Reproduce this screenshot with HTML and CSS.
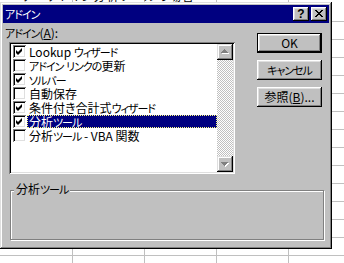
FILE: index.html
```html
<!DOCTYPE html>
<html lang="ja">
<head>
<meta charset="utf-8">
<link rel="stylesheet" href="styles.css">
</head>
<body>
<div class="sheet"><div class="sheet-text">ーア　アドイン分析ツールの場合</div></div>
<div class="dialog">
  <div class="titlebar">
    <span class="title"><span class="k">アドイン</span></span>
    <span class="tbtns">
      <span class="tbtn help">?</span>
      <span class="tbtn close"><svg width="16" height="14" viewBox="0 0 16 14" shape-rendering="crispEdges"><g fill="#000"><rect x="4" y="3" width="2" height="1"/><rect x="10" y="3" width="2" height="1"/><rect x="5" y="4" width="2" height="1"/><rect x="9" y="4" width="2" height="1"/><rect x="6" y="5" width="4" height="1"/><rect x="7" y="6" width="2" height="1"/><rect x="6" y="7" width="4" height="1"/><rect x="5" y="8" width="2" height="1"/><rect x="9" y="8" width="2" height="1"/><rect x="4" y="9" width="2" height="1"/><rect x="10" y="9" width="2" height="1"/></g></svg></span>
    </span>
  </div>
  <div class="main">
    <div class="left">
      <div class="label"><span class="k">アドイン</span>(<u>A</u>):</div>
      <div class="list">
        <div class="items">
          <div class="row"><span class="cb"><svg width="13" height="13" viewBox="0 0 13 13"><polygon points="3,5 5,7 9,3 9,6 5,10 3,8" fill="#000"/></svg></span><span class="txt">Lookup <span class="k">ウィザード</span></span></div>
          <div class="row"><span class="cb"></span><span class="txt"><span class="k">アドイン</span> <span class="k">リンクの</span>更新</span></div>
          <div class="row"><span class="cb"><svg width="13" height="13" viewBox="0 0 13 13"><polygon points="3,5 5,7 9,3 9,6 5,10 3,8" fill="#000"/></svg></span><span class="txt"><span class="k">ソルバー</span></span></div>
          <div class="row"><span class="cb"></span><span class="txt">自動保存</span></div>
          <div class="row"><span class="cb"><svg width="13" height="13" viewBox="0 0 13 13"><polygon points="3,5 5,7 9,3 9,6 5,10 3,8" fill="#000"/></svg></span><span class="txt">条件付き合計式<span class="k">ウィザード</span></span></div>
          <div class="row sel"><span class="cb"><svg width="13" height="13" viewBox="0 0 13 13"><polygon points="3,5 5,7 9,3 9,6 5,10 3,8" fill="#000"/></svg></span><span class="txt">分析<span class="k">ツール</span></span></div>
          <div class="row"><span class="cb"></span><span class="txt">分析<span class="k">ツール</span> - VBA 関数</span></div>
        </div>
        <div class="scroll">
          <div class="sbtn"><svg width="16" height="16" viewBox="0 0 16 16" shape-rendering="crispEdges"><g fill="#fff"><rect x="8" y="6" width="1" height="1"/><rect x="7" y="7" width="3" height="1"/><rect x="6" y="8" width="5" height="1"/><rect x="5" y="9" width="7" height="1"/></g><g fill="#808080"><rect x="7" y="5" width="1" height="1"/><rect x="6" y="6" width="3" height="1"/><rect x="5" y="7" width="5" height="1"/><rect x="4" y="8" width="7" height="1"/></g></svg></div>
          <div class="track"></div>
          <div class="sbtn"><svg width="16" height="16" viewBox="0 0 16 16" shape-rendering="crispEdges"><g fill="#fff"><rect x="5" y="7" width="7" height="1"/><rect x="6" y="8" width="5" height="1"/><rect x="7" y="9" width="3" height="1"/><rect x="8" y="10" width="1" height="1"/></g><g fill="#808080"><rect x="4" y="6" width="7" height="1"/><rect x="5" y="7" width="5" height="1"/><rect x="6" y="8" width="3" height="1"/><rect x="7" y="9" width="1" height="1"/></g></svg></div>
        </div>
      </div>
    </div>
    <div class="buttons">
      <div class="btn default"><span class="btn-in">OK</span></div>
      <div class="btn"><span class="btn-in"><span class="k">キャンセル</span></span></div>
      <div class="btn"><span class="btn-in">参照(<u>B</u>)...</span></div>
    </div>
  </div>
  <div class="group"><span class="legend">分析<span class="k">ツール</span></span></div>
</div>
</body>
</html>
```

FILE: styles.css
```css
* { box-sizing: border-box; }
html, body { margin: 0; padding: 0; }
body {
  width: 344px;
  height: 263px;
  overflow: hidden;
  position: relative;
  font-family: "Noto Sans CJK JP", "Noto Sans", sans-serif;
  font-feature-settings: "palt";
  font-size: 12px;
  color: #000;
  background-color: #fff;
  background-image:
    repeating-linear-gradient(to right, transparent 0 71px, #c0c0c0 71px 72px),
    repeating-linear-gradient(to bottom, transparent 0 17px, #c0c0c0 17px 18px);
  background-position: 1px 0, 0 4px;
}
.k { font-size: 11px; letter-spacing: -1px; }
.sheet { height: 3px; overflow: hidden; padding-left: 10px; }
.sheet-text { margin-top: -11px; line-height: 14px; font-size: 12px; letter-spacing: 1px; }

.dialog {
  position: absolute;
  left: 0;
  top: 2px;
  width: 332px;
  height: 247px;
  padding: 3px;
  background: #c0c0c0;
  box-shadow: inset -1px -1px #000, inset 1px 1px #dfdfdf, inset -2px -2px #808080, inset 2px 2px #fff;
}
.titlebar {
  height: 18px;
  background: #000080;
  display: flex;
  align-items: center;
  justify-content: space-between;
  padding: 0 2px;
}
.title { color: #fff; line-height: 18px; }
.tbtns { display: flex; gap: 2px; }
.tbtn {
  width: 16px;
  height: 14px;
  background: #c0c0c0;
  box-shadow: inset -1px -1px #000, inset 1px 1px #fff, inset -2px -2px #808080, inset 2px 2px #dfdfdf;
  display: flex;
  align-items: center;
  justify-content: center;
}
.help {
  font-family: "Liberation Sans", sans-serif;
  font-weight: bold;
  font-size: 12px;
  line-height: 14px;
  padding-bottom: 1px;
}
.close svg { display: block; }

.main { display: flex; height: 151px; }
.left { width: 232px; padding-left: 2px; }
.label { margin-top: 3px; height: 14px; line-height: 14px; }
.list {
  margin-top: 2px;
  margin-left: 4px;
  width: 226px;
  height: 132px;
  padding: 2px;
  background: #fff;
  display: flex;
  box-shadow: inset 1px 1px #808080, inset -1px -1px #fff, inset 2px 2px #000, inset -2px -2px #dfdfdf;
}
.items { flex: 1; min-width: 0; }
.row { display: flex; align-items: center; height: 14px; }
.cb {
  width: 13px;
  height: 13px;
  margin-left: 2px;
  margin-right: 1px;
  flex: none;
  background: #fff;
  box-shadow: inset 1px 1px #808080, inset -1px -1px #fff, inset 2px 2px #000, inset -2px -2px #dfdfdf;
}
.cb svg { display: block; }
.txt {
  flex: 1;
  height: 13px;
  line-height: 13px;
  padding-left: 2px;
  white-space: nowrap;
}
.sel .txt {
  background: #000080;
  color: #fff;
  outline: 1px dotted #ffff80;
  outline-offset: -1px;
}
.scroll { width: 16px; display: flex; flex-direction: column; }
.sbtn {
  width: 16px;
  height: 16px;
  flex: none;
  background: #c0c0c0;
  box-shadow: inset -1px -1px #000, inset 1px 1px #dfdfdf, inset -2px -2px #808080, inset 2px 2px #fff;
}
.sbtn svg { display: block; }
.track {
  flex: 1;
  background: repeating-conic-gradient(#c0c0c0 0 25%, #fff 0 50%) 0 0 / 2px 2px;
}

.buttons {
  margin-top: 10px;
  margin-left: 22px;
  display: flex;
  flex-direction: column;
  gap: 7px;
}
.btn {
  width: 65px;
  height: 20px;
  background: #c0c0c0;
  box-shadow: inset -1px -1px #000, inset 1px 1px #fff, inset -2px -2px #808080, inset 2px 2px #dfdfdf;
  display: flex;
  align-items: center;
  justify-content: center;
}
.btn.default { border: 1px solid #000; }
.btn-in { line-height: 14px; white-space: nowrap; }

.group {
  position: relative;
  margin: 16px 0 0 7px;
  width: 314px;
  height: 50px;
  border: 1px solid #808080;
  box-shadow: inset 1px 1px #fff, 1px 1px #fff;
}
.legend {
  position: absolute;
  left: 3px;
  top: -9px;
  padding: 0 2px;
  line-height: 14px;
  background: #c0c0c0;
}
```
